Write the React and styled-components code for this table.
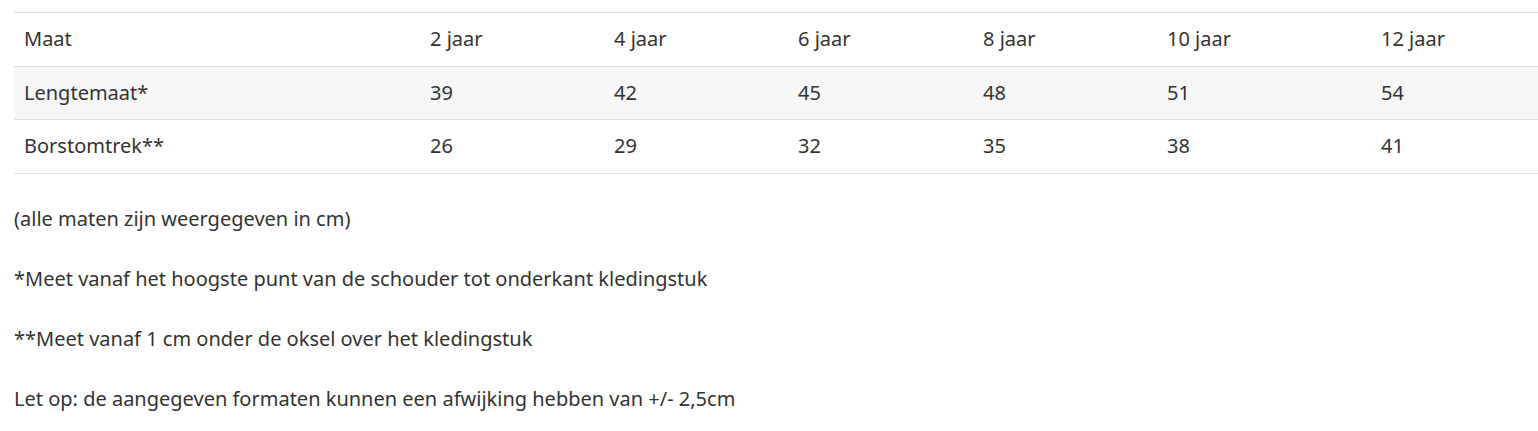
import React from "react";
import styled, { createGlobalStyle } from "styled-components";

const Global = createGlobalStyle`
  html, body { margin: 0; padding: 0; background: #fff; }
  body {
    font-family: "Noto Sans", "Open Sans", sans-serif;
    color: #333;
    font-size: 20px;
  }
`;

const Page = styled.div`
  padding: 12px 0 0 14px;
`;

const Table = styled.table`
  width: 1524px;
  border-collapse: collapse;
  table-layout: fixed;
`;

const Row = styled.tr`
  background: ${(p) => (p.$shaded ? "#f6f6f6" : "#fff")};
  border-top: 1px solid #dddddd;
  &:last-child { border-bottom: 1px solid #dddddd; }
`;

const Cell = styled.td`
  padding: 12px 10px;
  line-height: 28.5px;
  font-size: 20px;
  text-align: left;
  vertical-align: middle;
  white-space: nowrap;
`;

const Note = styled.p`
  margin: 30px 0 0;
  line-height: 30px;
  font-size: 20px;
`;

const widths = [406, 184, 184, 185, 184, 214, 167];

const rows = [
  ["Maat", "2 jaar", "4 jaar", "6 jaar", "8 jaar", "10 jaar", "12 jaar"],
  ["Lengtemaat*", "39", "42", "45", "48", "51", "54"],
  ["Borstomtrek**", "26", "29", "32", "35", "38", "41"],
];

const notes = [
  "(alle maten zijn weergegeven in cm)",
  "*Meet vanaf het hoogste punt van de schouder tot onderkant kledingstuk",
  "**Meet vanaf 1 cm onder de oksel over het kledingstuk",
  "Let op: de aangegeven formaten kunnen een afwijking hebben van +/- 2,5cm",
];

export default function App() {
  return (
    <>
      <Global />
      <Page>
        <Table>
          <colgroup>
            {widths.map((w, i) => (
              <col key={i} style={{ width: w }} />
            ))}
          </colgroup>
          <tbody>
            {rows.map((r, i) => (
              <Row key={i} $shaded={i === 1}>
                {r.map((c, j) => (
                  <Cell key={j}>{c}</Cell>
                ))}
              </Row>
            ))}
          </tbody>
        </Table>
        {notes.map((n, i) => (
          <Note key={i}>{n}</Note>
        ))}
      </Page>
    </>
  );
}
